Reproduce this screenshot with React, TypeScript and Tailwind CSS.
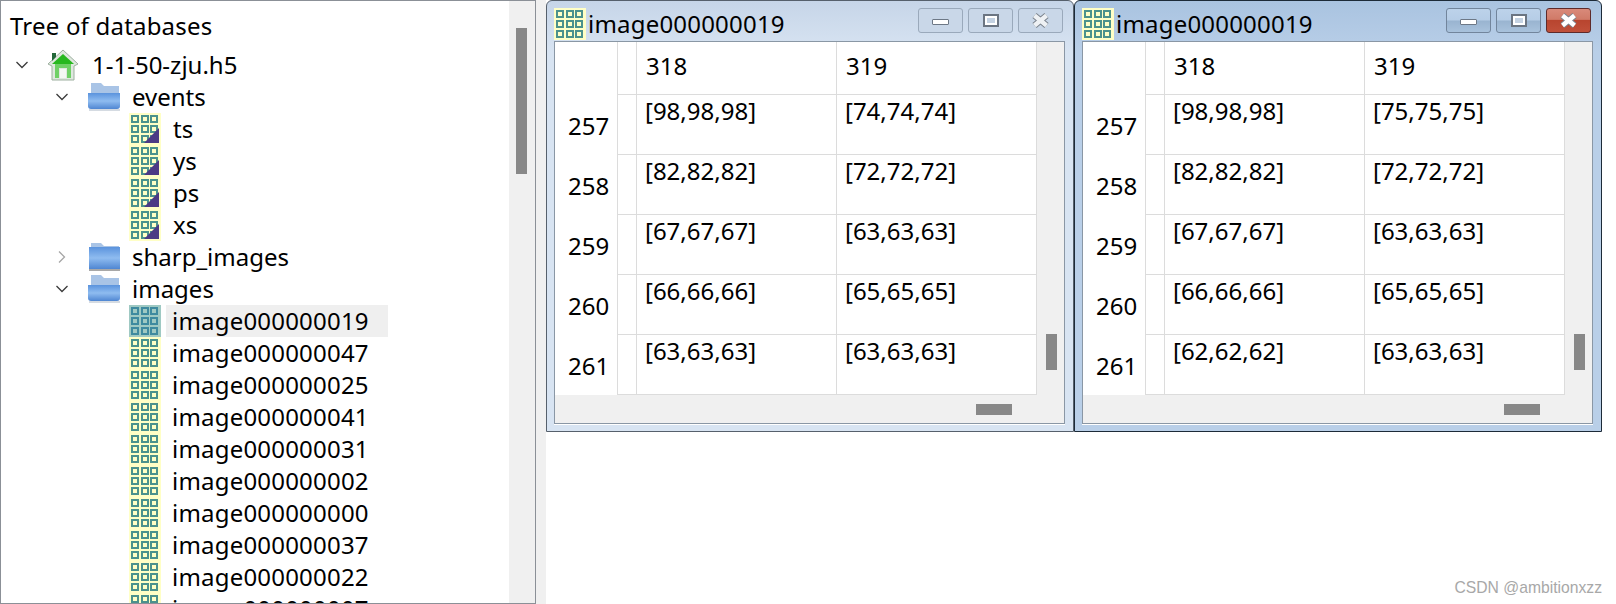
import React from "react";

const ui = { fontFamily: '"Noto Sans", "Open Sans", sans-serif' };

const GridIcon = ({ selected, corner }: { selected?: boolean; corner?: boolean }) => {
  const bg = selected ? "#9fc9c3" : "#ffffc6";
  const fg = selected ? "#3f8a9f" : "#4b928d";
  const xs = [2, 12, 21];
  const ys = [2, 12, 22];
  return (
    <svg width="32" height="32" viewBox="0 0 32 32" className="shrink-0">
      <rect width="32" height="32" fill={bg} />
      {ys.map((y) =>
        xs.map((x) => (
          <g key={`${x}-${y}`}>
            <rect x={x} y={y} width="8" height="8" fill={fg} />
            <rect x={x + 2} y={y + 2} width="4" height="4" fill={bg} />
          </g>
        ))
      )}
      {corner && <path d="M30 15V30H15Z" fill="#4c3a85" />}
    </svg>
  );
};

const Folder = ({ open }: { open?: boolean }) => (
  <svg width="34" height="30" viewBox="0 0 34 30" className="shrink-0">
    <defs>
      <linearGradient id="fold" x1="0" y1="0" x2="0" y2="1">
        <stop offset="0" stopColor="#5b93dd" />
        <stop offset="0.5" stopColor="#8fbcf0" />
        <stop offset="1" stopColor="#4f86d2" />
      </linearGradient>
    </defs>
    <path d="M3 1H13L16 4H31V12H3Z" fill="#a9c4e6" />
    {open ? (
      <path d="M0 11H32V24Q32 27 29 27H3Q0 27 0 24Z" fill="url(#fold)" />
    ) : (
      <path d="M1 5H32V27H1Z" fill="url(#fold)" />
    )}
    <rect x="1" y="27" width="31" height="2" fill={open ? "#d5dbe2" : "#a8a8a8"} />
  </svg>
);

const HomeIcon = () => (
  <svg width="32" height="32" viewBox="0 0 32 32" className="shrink-0">
    <path d="M16 1L31 15L27 17V31H5V17L1 15Z" fill="#dfe8df" stroke="#9db09f" strokeWidth="1" />
    <path d="M5 4H9V8L5 12Z" fill="#24683a" />
    <path d="M16 5L27 15H5Z" fill="#27b81f" />
    <path d="M8 15H24V29H20V19H12V29H8Z" fill="#6fd066" />
    <rect x="13" y="20" width="6" height="9" fill="#f4f7f4" />
  </svg>
);

const Chevron = ({ open }: { open?: boolean }) => (
  <svg width="14" height="14" viewBox="0 0 14 14" className="shrink-0">
    {open ? (
      <path d="M1.5 4L7 9.5L12.5 4" fill="none" stroke="#3b3b3b" strokeWidth="1.3" />
    ) : (
      <path d="M4 1.5L9.5 7L4 12.5" fill="none" stroke="#a6a6a6" strokeWidth="1.3" />
    )}
  </svg>
);

const TreeRow = ({ children }: { children: React.ReactNode }) => (
  <div className="flex h-[32px] shrink-0 items-center text-[24px] leading-[32px] text-black">{children}</div>
);

const datasets = ["ts", "ys", "ps", "xs"];
const images = [
  "image000000047",
  "image000000025",
  "image000000041",
  "image000000031",
  "image000000002",
  "image000000000",
  "image000000037",
  "image000000022",
  "image000000007",
];

const Tree = () => (
  <div className="flex h-[604px] w-[536px] shrink-0 border border-[#8b9097] bg-white">
    <div className="flex min-w-0 flex-1 flex-col overflow-hidden">
      <div className="ml-[9px] mt-[8px] h-[40px] shrink-0 text-[24px] leading-[34px] tracking-[0.2px] text-black">
        Tree of databases
      </div>
      <TreeRow>
        <div className="ml-[14px] w-[32px]">
          <Chevron open />
        </div>
        <HomeIcon />
        <span className="ml-[13px]">1-1-50-zju.h5</span>
      </TreeRow>
      <TreeRow>
        <div className="ml-[54px] w-[33px]">
          <Chevron open />
        </div>
        <Folder open />
        <span className="ml-[10px]">events</span>
      </TreeRow>
      {datasets.map((d) => (
        <TreeRow key={d}>
          <div className="ml-[128px]">
            <GridIcon corner />
          </div>
          <span className="ml-[12px]">{d}</span>
        </TreeRow>
      ))}
      <TreeRow>
        <div className="ml-[54px] w-[33px]">
          <Chevron />
        </div>
        <Folder />
        <span className="ml-[10px]">sharp_images</span>
      </TreeRow>
      <TreeRow>
        <div className="ml-[54px] w-[33px]">
          <Chevron open />
        </div>
        <Folder open />
        <span className="ml-[10px]">images</span>
      </TreeRow>
      <TreeRow>
        <div className="ml-[128px]">
          <GridIcon selected />
        </div>
        <span className="ml-[5px] w-[222px] bg-[#efefef] pl-[6px] tracking-[0.2px]">image000000019</span>
      </TreeRow>
      {images.map((n) => (
        <TreeRow key={n}>
          <div className="ml-[128px]">
            <GridIcon />
          </div>
          <span className="ml-[11px] tracking-[0.2px]">{n}</span>
        </TreeRow>
      ))}
    </div>
    <div className="w-[26px] shrink-0 bg-[#f0f0f0] pl-[7px] pt-[27px]">
      <div className="h-[146px] w-[11px] bg-[#888888]" />
    </div>
  </div>
);

const CaptionButton = ({ kind, active }: { kind: "min" | "max" | "close"; active: boolean }) => {
  const isClose = kind === "close" && active;
  return (
    <div
      className={`flex h-[25px] w-[45px] items-center justify-center rounded-[3px] border ${
        isClose
          ? "border-[#5e2a2a] bg-[linear-gradient(#d98a7a_0%,#d07a68_45%,#b8452f_50%,#c0503a_100%)]"
          : active
            ? "border-[#72859c] bg-[linear-gradient(#bcd2ea_0%,#b6cde6_48%,#99b4d0_52%,#a9c2dc_100%)]"
            : "border-[#9aa9bb] bg-[#c9d7e8]"
      }`}
    >
      {kind === "min" && <div className="mt-[2px] h-[6px] w-[17px] rounded-[1px] border border-[#6d7886] bg-white" />}
      {kind === "max" && (
        <div className="flex h-[13px] w-[16px] items-center justify-center border-2 border-[#6b7582] bg-white">
          <div className="h-[5px] w-[8px] bg-[#c4d2e2]" />
        </div>
      )}
      {kind === "close" && (
        <svg width="19" height="15" viewBox="0 0 19 15">
          <path d="M3.5 2.5L15.5 12.5M15.5 2.5L3.5 12.5" stroke="#7b838d" strokeWidth="6.5" />
          <path d="M3.5 2.5L15.5 12.5M15.5 2.5L3.5 12.5" stroke={active ? "#ffffff" : "#eef1f4"} strokeWidth="4.5" />
        </svg>
      )}
    </div>
  );
};

type Row = { n: number; a: string; b: string };

const DataWindow = ({ rows, active }: { rows: Row[]; active?: boolean }) => (
  <div
    className={`flex h-[432px] w-[528px] shrink-0 flex-col rounded-t-[6px] border pl-[7px] pr-[8px] ${
      active
        ? "border-[#1c2a38] bg-[linear-gradient(#a9c3e0_0%,#b9cfe8_12%,#b9cfe8_100%)]"
        : "border-[#56606c] bg-[linear-gradient(#c6d5e8_0%,#d8e4f2_12%,#d8e4f2_100%)]"
    }`}
  >
    <div className="flex h-[40px] shrink-0 items-start">
      <div className="mt-[7px]">
        <GridIcon />
      </div>
      <span className="ml-[2px] mt-[7px] flex-1 text-[24px] leading-[32px] tracking-[0.2px] text-black">image000000019</span>
      <div className="mt-[7px] flex gap-[5px] pr-[2px]">
        <CaptionButton kind="min" active={!!active} />
        <CaptionButton kind="max" active={!!active} />
        <CaptionButton kind="close" active={!!active} />
      </div>
    </div>
    <div className="flex h-[383px] w-[511px] flex-col border border-[#8a97a5] bg-[#f0f0f0] shadow-[0_1px_0_#ffffff]">
      <div className="flex h-[353px] shrink-0">
        <div className="grid w-[482px] shrink-0 grid-cols-[63px_19px_200px_200px] grid-rows-[53px_repeat(5,60px)] bg-white text-[24px] leading-[32px] text-black">
          <div className="border-r border-[#dcdcdc]" />
          <div className="border-b border-r border-[#dcdcdc]" />
          <div className="border-b border-r border-[#dcdcdc] pl-[9px] pt-[8px]">318</div>
          <div className="border-b border-r border-[#dcdcdc] pl-[9px] pt-[8px]">319</div>
          {rows.map((r) => (
            <React.Fragment key={r.n}>
              <div className="border-r border-[#dcdcdc] pl-[13px] pt-[15px]">{r.n}</div>
              <div className="border-b border-r border-[#dcdcdc]" />
              <div className="border-b border-r border-[#dcdcdc] pl-[8px]">{r.a}</div>
              <div className="border-b border-r border-[#dcdcdc] pl-[8px]">{r.b}</div>
            </React.Fragment>
          ))}
        </div>
        <div className="flex-1 pl-[9px] pt-[292px]">
          <div className="h-[36px] w-[11px] bg-[#888888]" />
        </div>
      </div>
      <div className="pl-[421px] pt-[9px]">
        <div className="h-[11px] w-[36px] bg-[#888888]" />
      </div>
    </div>
  </div>
);

const leftRows: Row[] = [
  { n: 257, a: "[98,98,98]", b: "[74,74,74]" },
  { n: 258, a: "[82,82,82]", b: "[72,72,72]" },
  { n: 259, a: "[67,67,67]", b: "[63,63,63]" },
  { n: 260, a: "[66,66,66]", b: "[65,65,65]" },
  { n: 261, a: "[63,63,63]", b: "[63,63,63]" },
];

const rightRows: Row[] = [
  { n: 257, a: "[98,98,98]", b: "[75,75,75]" },
  { n: 258, a: "[82,82,82]", b: "[72,72,72]" },
  { n: 259, a: "[67,67,67]", b: "[63,63,63]" },
  { n: 260, a: "[66,66,66]", b: "[65,65,65]" },
  { n: 261, a: "[62,62,62]", b: "[63,63,63]" },
];

export default function App() {
  return (
    <div className="relative flex h-[604px] w-[1616px] items-start overflow-hidden bg-white" style={ui}>
      <Tree />
      <div className="h-[604px] w-[10px] shrink-0 bg-[#f0f0f0]" />
      <div className="flex">
        <DataWindow rows={leftRows} />
        <DataWindow rows={rightRows} active />
      </div>
      <div className="absolute bottom-[5px] right-[14px] text-[15.7px] leading-[22px] text-[#a8a8a8] [font-family:'Liberation_Sans',sans-serif]">
        CSDN @ambitionxzz
      </div>
    </div>
  );
}
